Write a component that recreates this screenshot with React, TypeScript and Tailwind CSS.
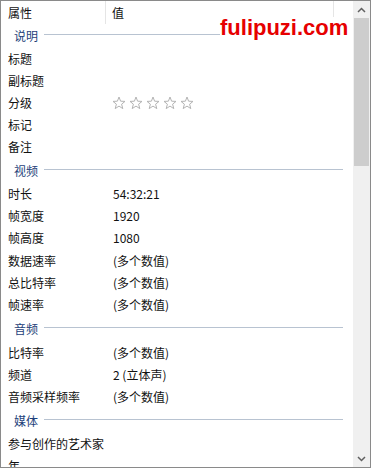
import React from "react";

type Row =
  | { type: "section"; label: string; h: string }
  | { type: "row"; name: string; value?: string; stars?: boolean; h?: string };

const rows: Row[] = [
  { type: "section", label: "说明", h: "h-[24px]" },
  { type: "row", name: "标题" },
  { type: "row", name: "副标题" },
  { type: "row", name: "分级", stars: true },
  { type: "row", name: "标记" },
  { type: "row", name: "备注" },
  { type: "section", label: "视频", h: "h-[25px]" },
  { type: "row", name: "时长", value: "54:32:21" },
  { type: "row", name: "帧宽度", value: "1920" },
  { type: "row", name: "帧高度", value: "1080" },
  { type: "row", name: "数据速率", value: "(多个数值)", h: "h-[23px]" },
  { type: "row", name: "总比特率", value: "(多个数值)" },
  { type: "row", name: "帧速率", value: "(多个数值)" },
  { type: "section", label: "音频", h: "h-[26px]" },
  { type: "row", name: "比特率", value: "(多个数值)" },
  { type: "row", name: "频道", value: "2 (立体声)" },
  { type: "row", name: "音频采样频率", value: "(多个数值)" },
  { type: "section", label: "媒体", h: "h-[25px]" },
  { type: "row", name: "参与创作的艺术家" },
  { type: "row", name: "年" },
];

function Star() {
  return (
    <svg width="14" height="14" viewBox="0 0 14 14">
      <polygon
        points="7,1 8.6,5.2 13,5.4 9.6,8.2 10.8,12.6 7,10.1 3.2,12.6 4.4,8.2 1,5.4 5.4,5.2"
        fill="none"
        stroke="#b4b4b4"
        strokeWidth="1"
        strokeLinejoin="round"
      />
    </svg>
  );
}

export default function App() {
  return (
    <div
      className="relative w-[371px] h-[468px] border border-[#8a8a8a] bg-white flex overflow-hidden text-[12px] text-[#111]"
      style={{ fontFamily: '"Noto Sans CJK SC", "Microsoft YaHei", sans-serif' }}
    >
      <div className="flex-1 flex flex-col overflow-hidden">
        {/* header */}
        <div className="h-[23px] flex shrink-0">
          <div className="w-[105px] pl-[7px] flex items-center border-r border-[#e5e5e5]">属性</div>
          <div className="w-[228px] pl-[6px] flex items-center border-r border-[#e5e5e5]">值</div>
          <div className="flex-1" />
        </div>
        {rows.map((r, i) =>
          r.type === "section" ? (
            <div key={i} className={`${r.h} shrink-0 flex items-center pl-[13px] pr-[10px]`}>
              <span className="text-[#1e3f7a]">{r.label}</span>
              <div className="flex-1 h-px bg-[#b8c3d1] ml-[6px] mt-[-3px]" />
            </div>
          ) : (
            <div key={i} className={`${r.h ?? "h-[22px]"} shrink-0 flex items-center`}>
              <div className="w-[106px] pl-[7px] whitespace-nowrap">{r.name}</div>
              <div className="pl-[6px] flex items-center whitespace-nowrap">
                {r.stars ? (
                  <div className="flex gap-[3px] ml-[-1px]">
                    <Star />
                    <Star />
                    <Star />
                    <Star />
                    <Star />
                  </div>
                ) : (
                  r.value
                )}
              </div>
            </div>
          )
        )}
      </div>
      {/* scrollbar */}
      <div className="w-[17px] bg-[#f0f0f0] flex flex-col shrink-0">
        <div className="h-[17px] flex items-center justify-center">
          <svg width="9" height="6" viewBox="0 0 9 6">
            <path d="M1 5 L4.5 1.5 L8 5" fill="none" stroke="#606060" strokeWidth="1.5" />
          </svg>
        </div>
        <div className="h-[148px] bg-[#cdcdcd] mx-[1px]" />
        <div className="flex-1" />
        <div className="h-[17px] flex items-center justify-center">
          <svg width="9" height="6" viewBox="0 0 9 6">
            <path d="M1 1 L4.5 4.5 L8 1" fill="none" stroke="#606060" strokeWidth="1.5" />
          </svg>
        </div>
      </div>
      <div
        className="absolute left-[219px] top-[16px] text-[22px] leading-[22px] font-bold text-[#e60000] bg-white"
        style={{ fontFamily: '"Liberation Sans", Arial, sans-serif' }}
      >
        fulipuzi.com
      </div>
    </div>
  );
}
